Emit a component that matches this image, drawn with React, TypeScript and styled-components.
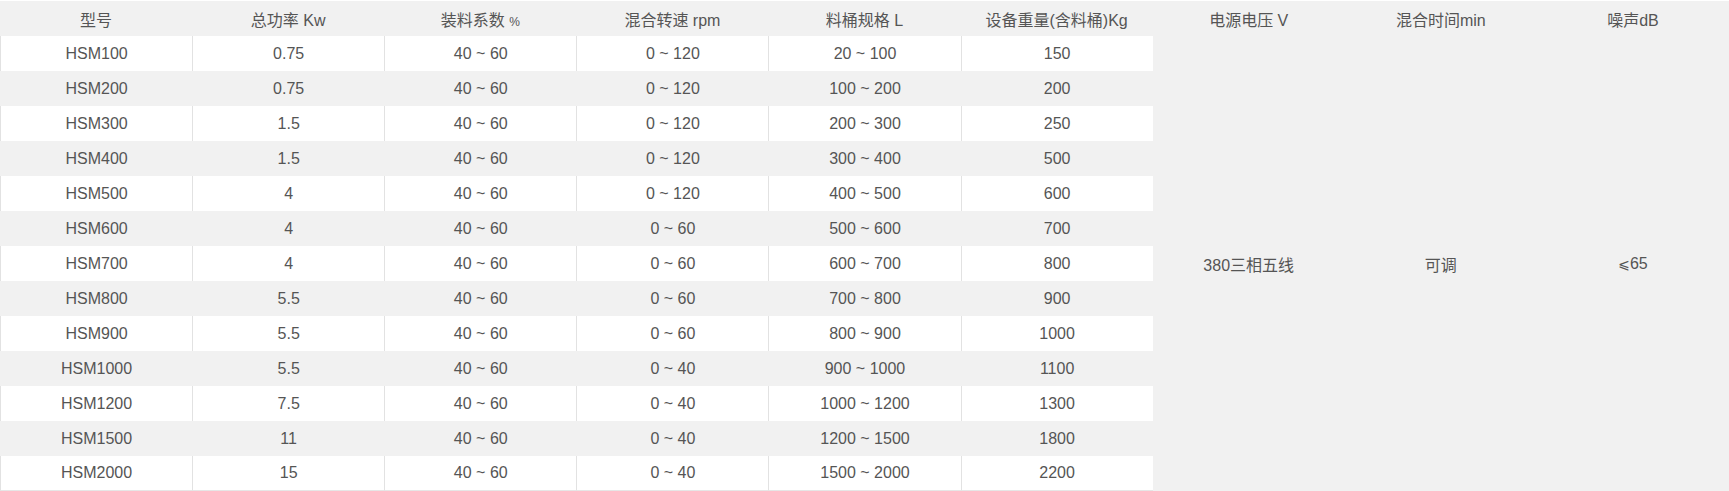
import styled, { createGlobalStyle } from 'styled-components';

const GlobalStyle = createGlobalStyle`
  html, body {
    margin: 0;
    padding: 0;
    background: #fff;
  }
`;

const Wrapper = styled.div`
  padding-top: 1px;
  font-family: "Liberation Sans", "Noto Sans CJK SC", sans-serif;
  font-size: 16px;
  color: #555;
`;

const Table = styled.table`
  width: 100%;
  table-layout: fixed;
  border-collapse: separate;
  border-spacing: 0;
`;

const HeadCell = styled.th`
  height: 35px;
  padding: 0;
  background: #f1f1f1;
  font-weight: normal;
  text-align: center;
  vertical-align: middle;
  white-space: nowrap;
`;

const Small = styled.span`
  font-size: 12px;
`;

const Row = styled.tr`
  height: 35px;
`;

const Cell = styled.td<{ $shade: boolean; $last: boolean }>`
  padding: 0;
  text-align: center;
  vertical-align: middle;
  white-space: nowrap;
  background: ${p => (p.$shade ? '#f1f1f1' : '#fff')};
  border-left: 1px solid ${p => (p.$shade ? '#f1f1f1' : '#e2e2e2')};
  border-bottom: ${p => (p.$last ? '1px solid #e6e6e6' : 'none')};
`;

const SpanCell = styled.td`
  padding: 0;
  text-align: center;
  vertical-align: middle;
  background: #f1f1f1;
`;

const LessEq = styled.span`
  font-family: "DejaVu Sans", "Liberation Sans", sans-serif;
  font-size: 14px;
`;

type Model = [string, string, string, string, string];

const models: Model[] = [
  ['HSM100', '0.75', '0 ~ 120', '20 ~ 100', '150'],
  ['HSM200', '0.75', '0 ~ 120', '100 ~ 200', '200'],
  ['HSM300', '1.5', '0 ~ 120', '200 ~ 300', '250'],
  ['HSM400', '1.5', '0 ~ 120', '300 ~ 400', '500'],
  ['HSM500', '4', '0 ~ 120', '400 ~ 500', '600'],
  ['HSM600', '4', '0 ~ 60', '500 ~ 600', '700'],
  ['HSM700', '4', '0 ~ 60', '600 ~ 700', '800'],
  ['HSM800', '5.5', '0 ~ 60', '700 ~ 800', '900'],
  ['HSM900', '5.5', '0 ~ 60', '800 ~ 900', '1000'],
  ['HSM1000', '5.5', '0 ~ 40', '900 ~ 1000', '1100'],
  ['HSM1200', '7.5', '0 ~ 40', '1000 ~ 1200', '1300'],
  ['HSM1500', '11', '0 ~ 40', '1200 ~ 1500', '1800'],
  ['HSM2000', '15', '0 ~ 40', '1500 ~ 2000', '2200'],
];

export default function App() {
  return (
    <>
      <GlobalStyle />
      <Wrapper>
        <Table>
          <thead>
            <tr>
              <HeadCell>型号</HeadCell>
              <HeadCell>总功率 Kw</HeadCell>
              <HeadCell>装料系数 <Small>%</Small></HeadCell>
              <HeadCell>混合转速 rpm</HeadCell>
              <HeadCell>料桶规格 L</HeadCell>
              <HeadCell>设备重量(含料桶)Kg</HeadCell>
              <HeadCell>电源电压 V</HeadCell>
              <HeadCell>混合时间min</HeadCell>
              <HeadCell>噪声dB</HeadCell>
            </tr>
          </thead>
          <tbody>
            {models.map(([name, power, speed, bucket, weight], i) => {
              const shade = i % 2 === 1;
              const last = i === models.length - 1;
              return (
                <Row key={name}>
                  <Cell $shade={shade} $last={last}>{name}</Cell>
                  <Cell $shade={shade} $last={last}>{power}</Cell>
                  <Cell $shade={shade} $last={last}>40 ~ 60</Cell>
                  <Cell $shade={shade} $last={last}>{speed}</Cell>
                  <Cell $shade={shade} $last={last}>{bucket}</Cell>
                  <Cell $shade={shade} $last={last}>{weight}</Cell>
                  {i === 0 && (
                    <>
                      <SpanCell rowSpan={models.length}>380三相五线</SpanCell>
                      <SpanCell rowSpan={models.length}>可调</SpanCell>
                      <SpanCell rowSpan={models.length}><LessEq>⩽</LessEq>65</SpanCell>
                    </>
                  )}
                </Row>
              );
            })}
          </tbody>
        </Table>
      </Wrapper>
    </>
  );
}
